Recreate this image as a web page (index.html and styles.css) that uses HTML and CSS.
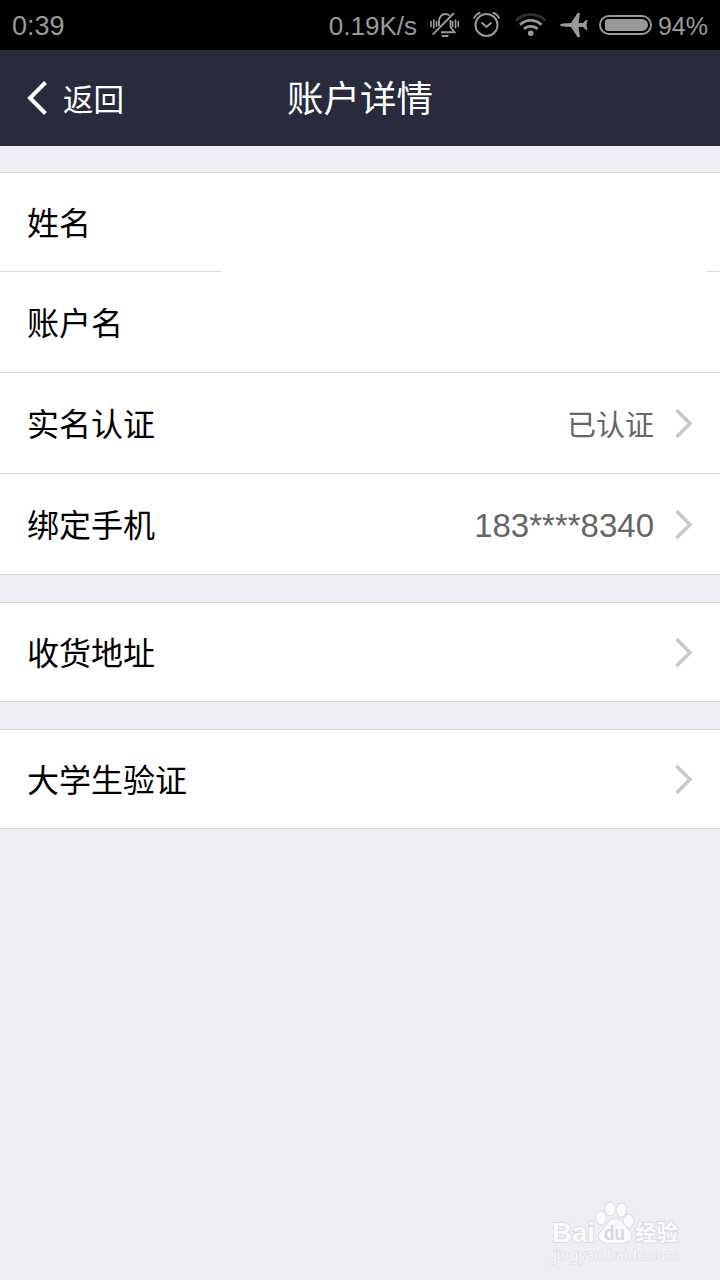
FILE: index.html
```html
<!DOCTYPE html>
<html lang="zh-CN">
<head>
    <meta charset="UTF-8">
    <meta name="viewport" content="width=device-width, initial-scale=1.0">
    <title>账户详情</title>
    <link rel="stylesheet" href="styles.css">
</head>
<body>
    <div class="status-bar">
        <span class="time">0:39</span>
        <span class="speed">0.19K/s</span>
        <svg class="icon-mute" width="30" height="26" viewBox="0 0 30 26" fill="none" stroke="#999" stroke-width="1.600">
            <path d="M1 9v6M3.800 7.500v9M6.500 9v6M22.500 9v6M25.500 7.500v9M28.300 9v6"/>
            <path d="M9 14V9.500C9 5 11.500 2 15.500 2c2 0 3 .6 4 1.500M20.500 8v7l4 5.200H11M2.700 22.700L24 1" stroke-width="1.900"/>
            <path d="M11 23h8l-1.500 2h-5z" fill="#999" stroke="none"/>
        </svg>
        <svg class="icon-alarm" width="28" height="26" viewBox="0 0 28 26" fill="none" stroke="#999" stroke-width="2">
            <circle cx="13.500" cy="13" r="11"/>
            <path d="M8.500 10.500l5 4.500 5-4.500M.8 6.500C2 3.500 4.500 1.500 7.500.5M26.200 6.500C25 3.500 22.500 1.500 19.500.5"/>
        </svg>
        <svg class="icon-wifi" width="32" height="26" viewBox="0 0 32 26" fill="none" stroke="#999" stroke-width="2.800">
            <path d="M1 8.500c8-8 21-8 29.500 0" stroke="#2e2e2e"/>
            <path d="M5 12.800c6-6 15.500-6 21.500 0M9 17c3.500-3.500 10-3.500 13.500 0"/>
            <circle cx="15.700" cy="21.300" r="2.800" fill="#999" stroke="none"/>
        </svg>
        <svg class="icon-plane" width="28" height="26" viewBox="0 0 28 26" fill="#999">
            <path d="M0 13Q0 11.700 3 11.500L11 11 17.500 1H20L18.500 11H23L26 8h1.500L26.500 13l1 5H26l-3-3h-4.500L20 25h-2.500L11 15l-8-.5Q0 14.300 0 13z"/>
        </svg>
        <div class="battery"><div class="battery-level"></div></div>
        <span class="percent">94%</span>
    </div>

    <header class="header">
        <a class="back" href="#">
            <svg width="22" height="36" viewBox="0 0 22 36" fill="none" stroke="#fff" stroke-width="4">
                <path d="M20.500 2.500L5 18l15.500 15.500"/>
            </svg>
            <span>返回</span>
        </a>
        <h1>账户详情</h1>
    </header>

    <main>
        <ul class="group">
            <li class="row row-name"><span class="label">姓名</span></li>
            <li class="row"><span class="label">账户名</span></li>
            <li class="row">
                <span class="label">实名认证</span>
                <span class="value">已认证</span>
                <svg class="arrow" width="18" height="30" viewBox="0 0 18 30"><path d="M1.500 2L15 15.500 1.500 29"/></svg>
            </li>
            <li class="row">
                <span class="label">绑定手机</span>
                <span class="value phone">183****8340</span>
                <svg class="arrow" width="18" height="30" viewBox="0 0 18 30"><path d="M1.500 2L15 15.500 1.500 29"/></svg>
            </li>
        </ul>
        <ul class="group">
            <li class="row">
                <span class="label">收货地址</span>
                <svg class="arrow" width="18" height="30" viewBox="0 0 18 30"><path d="M1.500 2L15 15.500 1.500 29"/></svg>
            </li>
        </ul>
        <ul class="group">
            <li class="row">
                <span class="label">大学生验证</span>
                <svg class="arrow" width="18" height="30" viewBox="0 0 18 30"><path d="M1.500 2L15 15.500 1.500 29"/></svg>
            </li>
        </ul>
    </main>

    <svg class="watermark" width="160" height="85" viewBox="0 0 160 85">
        <g class="mark">
            <text class="brand" x="12" y="52" textLength="43" lengthAdjust="spacingAndGlyphs">Bai</text>
            <ellipse cx="61" cy="28" rx="5" ry="6.500"/>
            <ellipse cx="70" cy="19" rx="5" ry="6.500"/>
            <ellipse cx="81.500" cy="20" rx="5" ry="6.500"/>
            <ellipse cx="88.500" cy="31" rx="5" ry="6.500"/>
            <path d="M75 29c5 0 8 4 11 8s6 6 5 10c-1 6-8 6-16 6s-15 0-16-6c-1-4 3-6 6-10s5-8 10-8z"/>
            <text class="du" x="64" y="50" textLength="21" lengthAdjust="spacingAndGlyphs">du</text>
            <text class="cn" x="95" y="50" textLength="43" lengthAdjust="spacingAndGlyphs">经验</text>
            <text class="site" x="13" y="69.500" textLength="126" lengthAdjust="spacingAndGlyphs">jingyan.baidu.com</text>
        </g>
    </svg>
</body>
</html>
```
FILE: styles.css
```css
* {
    margin: 0;
    padding: 0;
    box-sizing: border-box;
}

body {
    position: relative;
    min-height: 1280px;
    background: #efeef4;
    font-family: "Liberation Sans", "Noto Sans CJK SC", sans-serif;
    overflow: hidden;
}

.status-bar {
    display: flex;
    align-items: center;
    height: 50px;
    padding: 0 12px;
    background: #000;
    color: #999;
    font-size: 26px;
    white-space: nowrap;
}

.time,
.speed,
.percent {
    padding-top: 2px;
}

.time {
    font-size: 27px;
}

.speed {
    margin-left: auto;
}

.icon-mute {
    margin-left: 13px;
}

.icon-alarm {
    margin-left: 13px;
}

.icon-wifi {
    margin-left: 14px;
}

.icon-plane {
    margin-left: 13px;
}

.battery {
    width: 53px;
    height: 20px;
    margin-left: 11px;
    padding: 2px 2px 2px 4px;
    border: 2px solid #999;
    border-radius: 10px;
}

.battery-level {
    height: 12px;
    border-radius: 3px 6px 6px 3px;
    background: #999;
}

.percent {
    margin-left: 6px;
    font-size: 25px;
}

.header {
    display: grid;
    grid-template-columns: 1fr auto 1fr;
    align-items: center;
    height: 96px;
    padding: 0 25px;
    background: #282b3b;
    color: #fff;
}

.back {
    display: flex;
    align-items: center;
    gap: 16px;
    color: #fff;
    font-size: 30.5px;
    text-decoration: none;
}

h1 {
    padding-bottom: 3px;
    font-size: 36.5px;
    font-weight: normal;
}

.group {
    margin-top: 27px;
    border-top: 1px solid #d9d9db;
    list-style: none;
}

.group:first-child {
    margin-top: 26px;
}

.row {
    position: relative;
    display: flex;
    align-items: center;
    height: 101px;
    padding: 0 27px;
    border-bottom: 1px solid #d9d9db;
    background: #fff;
}

.row:first-child {
    height: 99px;
}

/* hides part of the separator under the name */
.row-name::after {
    content: "";
    position: absolute;
    left: 221px;
    right: 13px;
    bottom: -1px;
    height: 1px;
    background: #fff;
}

.label {
    padding-bottom: 2px;
    color: #000;
    font-size: 32px;
}

.value {
    margin-left: auto;
    color: #666;
    font-size: 29px;
}

.phone {
    padding-top: 4px;
    font-size: 33px;
}

.arrow {
    margin-left: auto;
    fill: none;
    stroke: #c8c8c8;
    stroke-width: 3.6;
}

.value + .arrow {
    margin-left: 21px;
}

.watermark {
    position: absolute;
    left: 540px;
    top: 1190px;
}

.mark {
    fill: #fafafc;
    stroke: #d8d8dd;
    stroke-width: 1.6;
    paint-order: stroke;
}

.brand,
.du,
.cn {
    font-weight: bold;
}

.brand {
    font-size: 28px;
}

.du {
    font-size: 20px;
    fill: #d8d8dd;
    stroke: none;
}

.cn {
    font-size: 22px;
}

.site {
    font-family: "Noto Sans", sans-serif;
    font-size: 14px;
    stroke-width: 1.2;
}
```
